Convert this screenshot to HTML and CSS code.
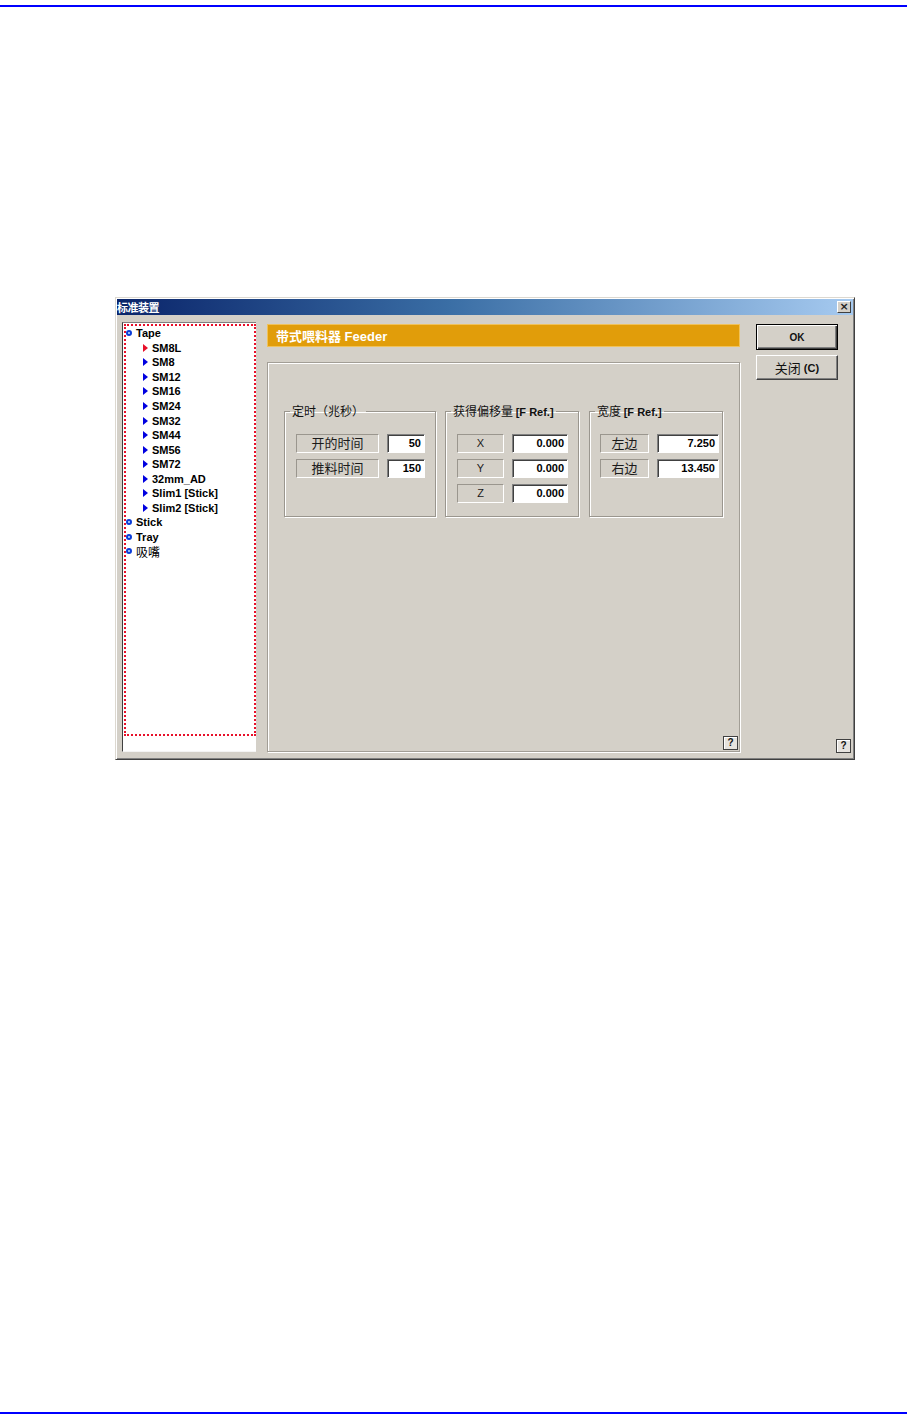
FILE: index.html
```html
<!DOCTYPE html>
<html lang="zh">
<head>
<meta charset="utf-8">
<title>标准装置</title>
<link rel="stylesheet" href="styles.css">
</head>
<body>
<div class="page">
  <div class="rule rule-top"></div>

  <div class="dialog">
    <div class="titlebar">
      <span class="title">标准装置</span>
      <span class="close">×</span>
    </div>
    <div class="dlg-body">
      <div class="tree">
        <div class="tree-focus">
          <div class="node root"><i class="ring"></i>Tape</div>
          <div class="node child sel"><i class="tri"></i>SM8L</div>
          <div class="node child"><i class="tri"></i>SM8</div>
          <div class="node child"><i class="tri"></i>SM12</div>
          <div class="node child"><i class="tri"></i>SM16</div>
          <div class="node child"><i class="tri"></i>SM24</div>
          <div class="node child"><i class="tri"></i>SM32</div>
          <div class="node child"><i class="tri"></i>SM44</div>
          <div class="node child"><i class="tri"></i>SM56</div>
          <div class="node child"><i class="tri"></i>SM72</div>
          <div class="node child"><i class="tri"></i>32mm_AD</div>
          <div class="node child"><i class="tri"></i>Slim1 [Stick]</div>
          <div class="node child"><i class="tri"></i>Slim2 [Stick]</div>
          <div class="node root"><i class="ring"></i>Stick</div>
          <div class="node root"><i class="ring"></i>Tray</div>
          <div class="node root cjk"><i class="ring"></i>吸嘴</div>
        </div>
      </div>

      <div class="main">
        <div class="header">带式喂料器 Feeder</div>
        <div class="panel">
          <div class="groups">
            <fieldset class="grp g1">
              <legend>定时（兆秒）</legend>
              <div class="rows">
                <div class="row"><span class="lbl">开的时间</span><span class="val">50</span></div>
                <div class="row"><span class="lbl">推料时间</span><span class="val">150</span></div>
              </div>
            </fieldset>
            <fieldset class="grp g2">
              <legend>获得偏移量 <b class="ref">[F Ref.]</b></legend>
              <div class="rows">
                <div class="row"><span class="lbl lat">X</span><span class="val">0.000</span></div>
                <div class="row"><span class="lbl lat">Y</span><span class="val">0.000</span></div>
                <div class="row"><span class="lbl lat">Z</span><span class="val">0.000</span></div>
              </div>
            </fieldset>
            <fieldset class="grp g3">
              <legend>宽度 <b class="ref">[F Ref.]</b></legend>
              <div class="rows">
                <div class="row"><span class="lbl">左边</span><span class="val">7.250</span></div>
                <div class="row"><span class="lbl">右边</span><span class="val">13.450</span></div>
              </div>
            </fieldset>
          </div>
          <span class="help">?</span>
        </div>
      </div>

      <div class="side">
        <div class="btn btn-default"><b class="ok">OK</b></div>
        <div class="btn btn-close">关闭 <b class="ref">(C)</b></div>
        <span class="help side-help">?</span>
      </div>
    </div>
  </div>

  <div class="rule rule-bottom"></div>
</div>
</body>
</html>
```

FILE: styles.css
```css
html, body {
  margin: 0;
  padding: 0;
  background: #ffffff;
}

body {
  font-family: "Liberation Sans", "Noto Sans CJK SC", sans-serif;
  color: #111;
}

.page {
  width: 907px;
  height: 1424px;
  overflow: hidden;
  display: flex;
  flex-direction: column;
}

.rule {
  height: 2px;
  background: #0000ff;
  flex: none;
}

.rule-top {
  margin-top: 5px;
}

.rule-bottom {
  margin-top: 652px;
}

/* ---------- dialog ---------- */
.dialog {
  flex: none;
  margin: 290px 0 0 115px;
  width: 740px;
  height: 463px;
  box-sizing: border-box;
  background: #d4d0c8;
  border: 1px solid;
  border-color: #dcd8d0 #404040 #404040 #dcd8d0;
  box-shadow: inset 1px 1px 0 #ffffff, inset -1px -1px 0 #808080;
  display: flex;
  flex-direction: column;
}

.titlebar {
  margin: 1px 1px 0 1px;
  height: 16px;
  flex: none;
  display: flex;
  align-items: center;
  justify-content: space-between;
  background: linear-gradient(to right, #0a246a 0%, #3a6ea5 45%, #a6caf0 100%);
}

.title {
  font-family: "Noto Sans CJK SC", sans-serif;
  font-weight: 700;
  font-size: 11px;
  line-height: 14px;
  color: #ffffff;
  letter-spacing: -0.5px;
}

.close {
  width: 14px;
  height: 12px;
  margin-right: 2px;
  box-sizing: border-box;
  background: #d4d0c8;
  border: 1px solid;
  border-color: #ffffff #404040 #404040 #ffffff;
  font-family: "DejaVu Sans", sans-serif;
  font-weight: 700;
  font-size: 11px;
  line-height: 9px;
  text-align: center;
  color: #222;
}

.dlg-body {
  flex: 1;
  display: flex;
  padding: 7px 0 7px 6px;
  min-height: 0;
}

/* ---------- tree ---------- */
.tree {
  width: 134px;
  flex: none;
  box-sizing: border-box;
  background: #ffffff;
  border-left: 1px solid #404040;
  border-top: 1px solid #808080;
  border-bottom: 1px solid #f4f4f4;
}

.tree-focus {
  margin: 1px 0 0 1px;
  height: 412px;
  box-sizing: border-box;
  border: 2px dotted #e8102a;
  padding-top: 0;
}

.node {
  height: 14.55px;
  display: flex;
  align-items: center;
  font-weight: 700;
  font-size: 11px;
  color: #000;
  white-space: nowrap;
}

.node.cjk {
  font-family: "Noto Sans CJK SC", sans-serif;
  font-weight: 400;
  font-size: 12px;
}

.ring {
  width: 6px;
  height: 6px;
  box-sizing: border-box;
  border: 2px solid #0a3cd8;
  border-radius: 50%;
  background: #bfe4ff;
  margin-right: 4px;
  margin-left: 0;
  flex: none;
}

.child {
  padding-left: 17px;
}

.tri {
  width: 0;
  height: 0;
  border-left: 5px solid #0000e0;
  border-top: 4px solid transparent;
  border-bottom: 4px solid transparent;
  margin-right: 4px;
  flex: none;
}

.sel .tri {
  border-left-color: #e8102a;
}

/* ---------- main ---------- */
.main {
  margin-left: 11px;
  width: 473px;
  flex: none;
  display: flex;
  flex-direction: column;
}

.header {
  margin-top: 2px;
  height: 23px;
  flex: none;
  box-sizing: border-box;
  background: #e19d0a;
  border: 1px solid #f0c25a;
  padding-left: 8px;
  display: flex;
  align-items: center;
  font-family: "Liberation Sans", "Noto Sans CJK SC", sans-serif;
  font-weight: 700;
  font-size: 13px;
  color: #ffffff;
}

.panel {
  margin-top: 15px;
  flex: 1;
  box-sizing: border-box;
  border: 1px solid #a29e96;
  box-shadow: inset 1px 1px 0 #ffffff, 1px 1px 0 #ffffff;
  padding: 41px 0 0 16px;
  display: flex;
  flex-direction: column;
}

.groups {
  display: flex;
  gap: 9px;
}

.grp {
  margin: 0;
  height: 113px;
  box-sizing: border-box;
  padding: 16px 0 0 11px;
  border: 1px solid #9a968e;
  box-shadow: inset 1px 1px 0 #ffffff, 1px 1px 0 #ffffff;
  min-width: 0;
}

.g1 { width: 152px; }
.g2 { width: 134px; }
.g3 { width: 134px; margin-left: 1px; padding-left: 10px; }

legend {
  height: 14px;
  font-family: "Noto Sans CJK SC", sans-serif;
  font-size: 12px;
  line-height: 14px;
  padding: 0 2px;
  margin-left: -6px;
  color: #111;
  white-space: nowrap;
}

.g3 legend {
  margin-left: -5px;
}

.ref {
  font-family: "Liberation Sans", sans-serif;
  font-weight: 700;
  font-size: 11px;
  line-height: 10px;
}

.rows {
  display: flex;
  flex-direction: column;
  gap: 6px;
}

.row {
  display: flex;
  gap: 8px;
  height: 19px;
}

.lbl {
  box-sizing: border-box;
  height: 19px;
  border: 1px solid;
  border-color: #9a968e #ffffff #ffffff #9a968e;
  font-family: "Noto Sans CJK SC", sans-serif;
  font-size: 13px;
  line-height: 16px;
  text-align: center;
  color: #1a1a1a;
}

.lbl.lat {
  font-family: "Liberation Sans", sans-serif;
  font-size: 11px;
  line-height: 17px;
}

.val {
  box-sizing: border-box;
  height: 19px;
  background: #ffffff;
  border: 1px solid;
  border-color: #808080 #ffffff #ffffff #808080;
  box-shadow: inset 1px 1px 0 #404040;
  font-weight: 700;
  font-size: 11px;
  line-height: 17px;
  text-align: right;
  padding-right: 3px;
  color: #000;
}

.g1 .lbl { width: 83px; }
.g1 .val { width: 38px; }
.g2 .lbl { width: 47px; }
.g2 .val { width: 56px; }
.g3 .lbl { width: 49px; }
.g3 .val { width: 62px; }

.help {
  width: 15px;
  height: 14px;
  box-sizing: border-box;
  border: 1px solid #404040;
  box-shadow: inset 1px 1px 0 #ffffff;
  background: #e6e3de;
  font-weight: 700;
  font-size: 10px;
  line-height: 12px;
  text-align: center;
  color: #111;
  align-self: flex-end;
  margin: auto 1px 1px 0;
}

/* ---------- side buttons ---------- */
.side {
  margin-left: 16px;
  flex: 1;
  display: flex;
  flex-direction: column;
  padding-right: 3px;
}

.btn {
  width: 82px;
  box-sizing: border-box;
  display: flex;
  align-items: center;
  justify-content: center;
  background: #d4d0c8;
  color: #111;
}

.btn-default {
  margin-top: 2px;
  height: 26px;
  border: 1px solid #000;
  box-shadow: inset 1px 1px 0 #ffffff, inset -1px -1px 0 #404040, inset -2px -2px 0 #808080;
}

.ok {
  font-size: 10px;
}

.btn-close {
  margin-top: 5px;
  height: 25px;
  border: 1px solid;
  border-color: #ffffff #404040 #404040 #ffffff;
  box-shadow: inset -1px -1px 0 #808080;
  font-family: "Noto Sans CJK SC", sans-serif;
  font-size: 13px;
  gap: 3px;
}

.side-help {
  margin: auto 0 -1px 0;
}
```
